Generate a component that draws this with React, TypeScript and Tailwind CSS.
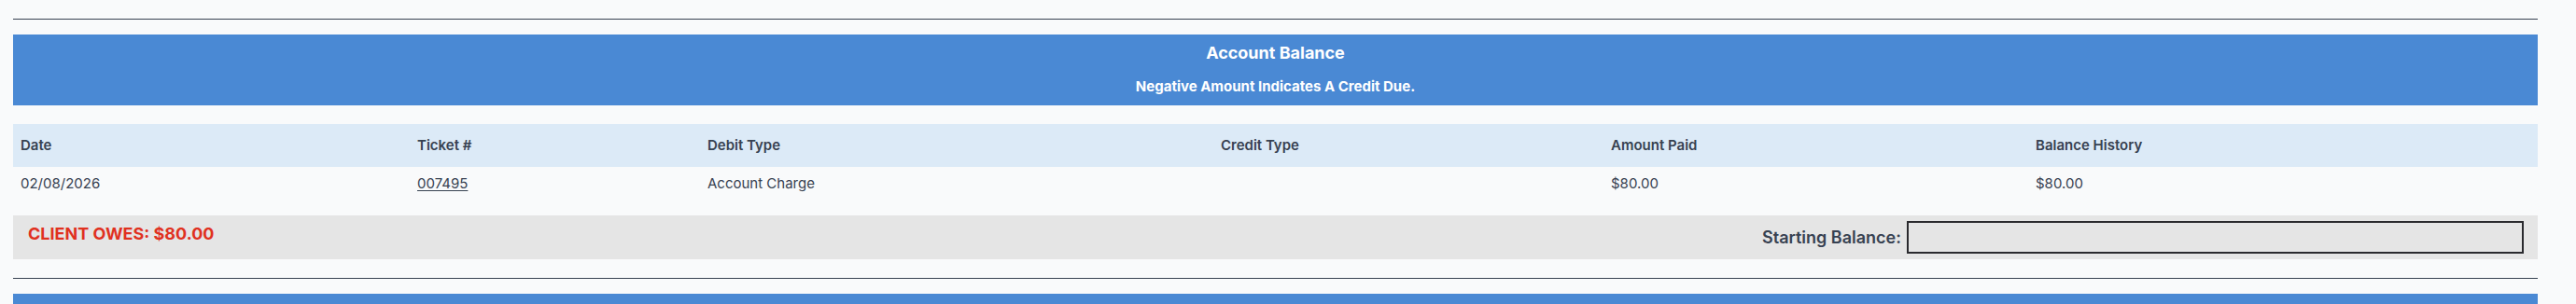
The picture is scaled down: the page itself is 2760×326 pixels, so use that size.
import React from "react";

type Entry = {
  date: string;
  ticket: string;
  debitType: string;
  creditType: string;
  amountPaid: string;
  balance: string;
};

const entries: Entry[] = [
  {
    date: "02/08/2026",
    ticket: "007495",
    debitType: "Account Charge",
    creditType: "",
    amountPaid: "$80.00",
    balance: "$80.00",
  },
];

const columns = ["Date", "Ticket #", "Debit Type", "Credit Type", "Amount Paid", "Balance History"];

const gridCols = "grid grid-cols-[425px_311px_550px_418px_455px_1fr]";

export default function App() {
  return (
    <div
      className="min-h-[326px] bg-[#f9fafb] pl-[14px] pr-[41px] pt-[20px] text-[#374151]"
      style={{ fontFamily: "Inter, 'Noto Sans', sans-serif" }}
    >
      <div className="h-px bg-[#374151]" />

      {/* Section banner */}
      <div className="mt-4 flex flex-col items-center bg-[#4a89d4] pb-[10px] pt-[8px] text-white">
        <div className="text-[18px] font-bold leading-6">Account Balance</div>
        <div className="mt-[14px] text-[15px] font-bold leading-5">Negative Amount Indicates A Credit Due.</div>
      </div>

      {/* Ledger table */}
      <div className="mt-5">
        <div className={`${gridCols} h-[46px] items-center bg-[#dceaf7] text-[15px] font-semibold leading-5`}>
          {columns.map((c) => (
            <div key={c} className="px-2">
              {c}
            </div>
          ))}
        </div>
        {entries.map((e) => (
          <div key={e.ticket} className={`${gridCols} text-[15px] leading-5`}>
            <div className="px-2 py-2">{e.date}</div>
            <div className="px-2 py-2">
              <a href="#" className="underline underline-offset-2">
                {e.ticket}
              </a>
            </div>
            <div className="px-2 py-2">{e.debitType}</div>
            <div className="px-2 py-2">{e.creditType}</div>
            <div className="px-2 py-2">{e.amountPaid}</div>
            <div className="px-2 py-2">{e.balance}</div>
          </div>
        ))}
      </div>

      {/* Totals bar */}
      <div className="mt-4 flex items-start justify-between bg-[#e5e5e5] py-[6px] pl-[16px] pr-[15px]">
        <div className="text-lg font-bold leading-7 text-[#e0311f]">CLIENT OWES: $80.00</div>
        <div className="flex items-center gap-[6px]">
          <label className="text-lg font-semibold leading-7">Starting Balance:</label>
          <input
            type="text"
            className="h-[35px] w-[661px] border-2 border-[#2a2a2e] bg-[#e5e5e5] px-2 text-sm outline-none"
          />
        </div>
      </div>

      <div className="mt-5 h-px bg-[#374151]" />

      <div className="mt-4 h-[76px] bg-[#4a89d4]" />
    </div>
  );
}
